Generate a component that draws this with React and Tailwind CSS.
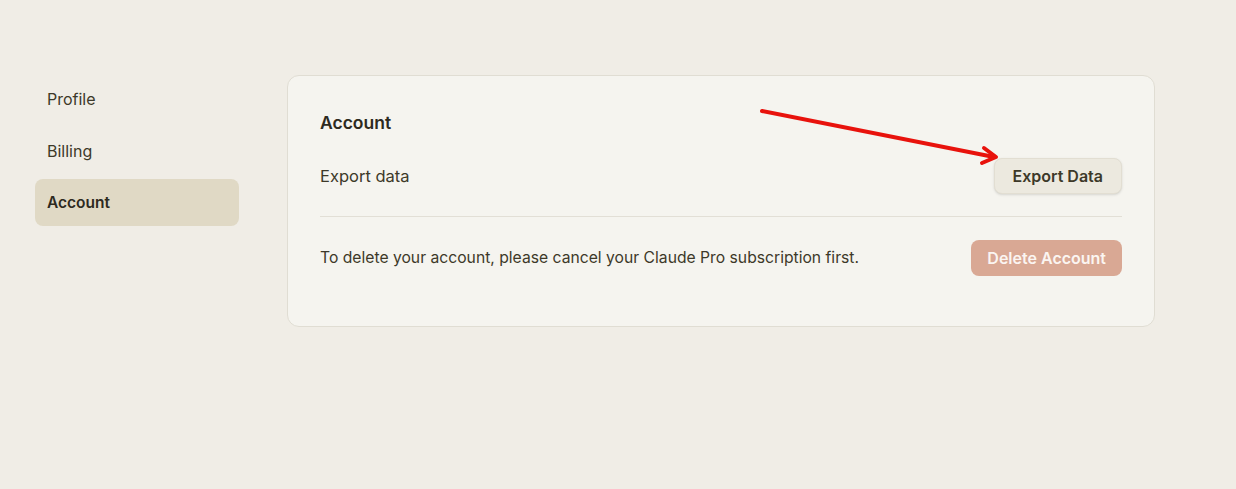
export default function App() {
  const font = { fontFamily: 'Inter, "Noto Sans", sans-serif' };
  return (
    <div className="relative min-h-[489px] w-full bg-[#f0ede6] text-[#3d3929]" style={font}>
      <div className="flex pt-[75px] pl-[35px] gap-[48px]">
        <nav className="flex w-[204px] flex-col gap-[5px]">
          <div className="flex h-[47px] items-center rounded-lg px-3 text-[16px] text-[#3d3929]">Profile</div>
          <div className="flex h-[47px] items-center rounded-lg px-3 text-[16px] text-[#3d3929]">Billing</div>
          <div className="flex h-[47px] items-center rounded-lg bg-[#e0d9c5] px-3 text-[15.5px] font-semibold text-[#2d2a20]">Account</div>
        </nav>
        <section className="w-[868px] rounded-xl border border-[#e0ddd3] bg-[#f5f4ef] px-8 pt-[33px] pb-[50px]">
          <h2 className="h-7 leading-7 text-[17.5px] font-semibold text-[#2d2a20]">Account</h2>
          <div className="mt-[21px] flex h-9 items-center justify-between">
            <span className="text-[16.5px]">Export data</span>
            <button className="h-9 rounded-lg border border-[#e2ded2] bg-[#ece9df] px-[18px] text-[16px] font-semibold text-[#3d3929] shadow-sm">Export Data</button>
          </div>
          <div className="mt-[22px] h-px bg-[#e2dfd6]" />
          <div className="mt-[23px] flex h-9 items-center justify-between">
            <span className="text-[15.7px]">To delete your account, please cancel your Claude Pro subscription first.</span>
            <button className="h-9 rounded-lg bg-[#d9a894] px-4 text-[16px] font-semibold text-[#fbf5f1]">Delete Account</button>
          </div>
        </section>
      </div>
      <svg className="pointer-events-none absolute left-0 top-0" width="1236" height="489">
        <g stroke="#e8120c" strokeWidth="4" strokeLinecap="round" strokeLinejoin="round" fill="none">
          <line x1="762" y1="111" x2="994" y2="157" />
          <polyline points="984,148 996,157 982,163" />
        </g>
      </svg>
    </div>
  );
}
